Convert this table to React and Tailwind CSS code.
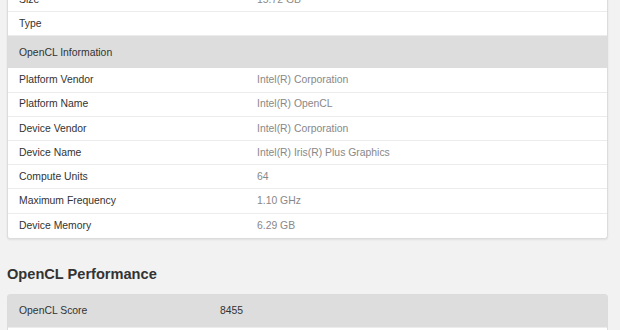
import React from 'react';

const rows = [
  { label: 'Platform Vendor', value: 'Intel(R) Corporation' },
  { label: 'Platform Name', value: 'Intel(R) OpenCL' },
  { label: 'Device Vendor', value: 'Intel(R) Corporation' },
  { label: 'Device Name', value: 'Intel(R) Iris(R) Plus Graphics' },
  { label: 'Compute Units', value: '64' },
  { label: 'Maximum Frequency', value: '1.10 GHz' },
  { label: 'Device Memory', value: '6.29 GB' },
];

const Row = ({ label, value, last }) => (
  <div className={`flex items-center h-[24.2px] pl-[11px] ${last ? '' : 'border-b border-[#ececec]'}`}>
    <div className="w-[238px] text-[#333]">{label}</div>
    <div className="text-[#888]">{value}</div>
  </div>
);

const App = () => {
  return (
    <div
      className="h-[330px] overflow-hidden bg-[#f2f2f2] text-[10.4px] px-[7px]"
      style={{ fontFamily: '"Liberation Sans", Arial, sans-serif' }}
    >
      {/* System / OpenCL info card */}
      <div className="w-[601px] -mt-[12px] bg-white border border-t-0 border-[#dcdcdc] rounded-b-[3px] shadow-[0_1px_2px_rgba(0,0,0,0.08)]">
        <Row label="Size" value="15.72 GB" />
        <Row label="Type" value="" />
        <div className="flex items-center h-[32px] pl-[11px] bg-[#dddddd] text-[#333]">
          OpenCL Information
        </div>
        {rows.map((r, i) => (
          <Row key={r.label} label={r.label} value={r.value} last={i === rows.length - 1} />
        ))}
      </div>

      {/* Performance */}
      <h2 className="mt-[26px] mb-[10px] text-[14.6px] font-bold text-[#333] leading-[19px]">
        OpenCL Performance
      </h2>
      <div className="w-[601px] bg-white border border-[#dcdcdc] rounded-t-[3px]">
        <div className="flex items-center h-[33px] pl-[11px] bg-[#dddddd] border-b border-[#ececec]">
          <div className="w-[201px] text-[#333]">OpenCL Score</div>
          <div className="text-[#333]">8455</div>
        </div>
        <div className="h-[24px]" />
      </div>
    </div>
  );
};

export default App;
